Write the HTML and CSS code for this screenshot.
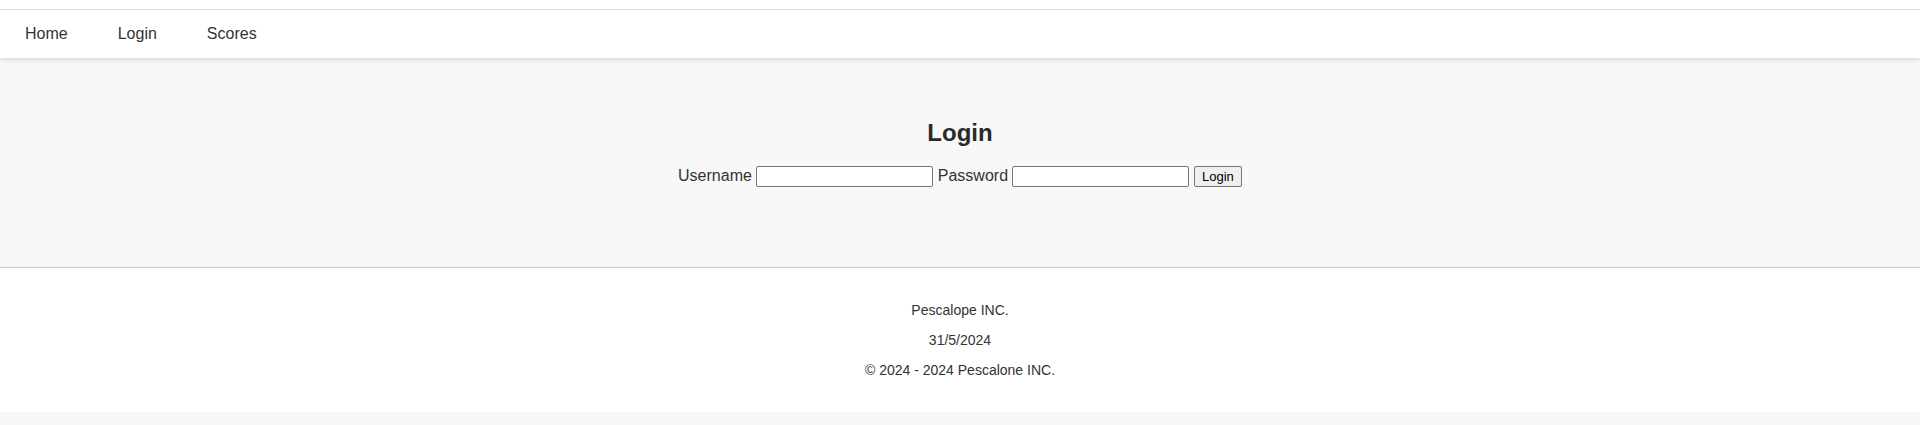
FILE: index.html
```html
<!DOCTYPE html>
<html lang="en">
<head>
<meta charset="utf-8">
<title>Login</title>
<link rel="stylesheet" href="styles.css">
</head>
<body>
<header class="header">
  <nav class="nav">
    <a class="nav-link" href="#">Home</a>
    <a class="nav-link" href="#">Login</a>
    <a class="nav-link" href="#">Scores</a>
  </nav>
</header>
<main class="main">
  <h2 class="title">Login</h2>
  <form class="login-form">
    <label class="field-label" for="u">Username</label> <input class="field" id="u" type="text"> <label class="field-label" for="p">Password</label> <input class="field" id="p" type="password"> <button class="btn" type="button">Login</button>
  </form>
</main>
<footer class="footer">
  <p class="footer-line">Pescalope INC.</p>
  <p class="footer-line">31/5/2024</p>
  <p class="footer-line">&copy; 2024 - 2024 Pescalone INC.</p>
</footer>
</body>
</html>
```

FILE: styles.css
```css
* { box-sizing: border-box; }
html, body { margin: 0; padding: 0; }
body {
  background: #f8f8f8;
  color: #333;
  font-family: "Liberation Sans", Arial, sans-serif;
  font-size: 16px;
}
.header {
  background: #fff;
  padding-top: 9px;
  position: relative;
  z-index: 1;
  box-shadow: 0 2px 5px rgba(0,0,0,0.12);
}
.nav {
  display: flex;
  border-top: 1px solid #dedede;
  height: 49px;
  align-items: center;
}
.nav-link {
  color: #333;
  text-decoration: none;
  padding: 0 25px;
  line-height: 20px;
}
.main {
  background: #f8f8f8;
  text-align: center;
  padding: 61px 0 0;
  height: 210px;
  border-bottom: 1px solid #cbcbcb;
}
.title {
  margin: 0;
  font-size: 24px;
  line-height: 28px;
  font-weight: bold;
  color: #2a2a2a;
}
.login-form {
  margin-top: 18px;
  line-height: 22px;
}
.field-label { font-size: 16px; }
.field {
  width: 177px;
  height: 21px;
  border: 1px solid #767676;
  border-radius: 2px;
  background: #fff;
  font-family: "Liberation Sans", Arial, sans-serif;
  font-size: 13px;
  padding: 1px 2px;
  vertical-align: baseline;
}
.btn {
  font-family: "Liberation Sans", Arial, sans-serif;
  font-size: 13px;
  height: 21px;
  width: 48px;
  padding: 1px 6px;
  border: 1px solid #767676;
  border-radius: 2px;
  background: #efefef;
  color: #000;
}
.footer {
  background: #fff;
  text-align: center;
  padding: 32px 0;
  display: flex;
  flex-direction: column;
  gap: 10px;
  font-size: 14px;
}
.footer-line {
  margin: 0;
  line-height: 20px;
}
```
